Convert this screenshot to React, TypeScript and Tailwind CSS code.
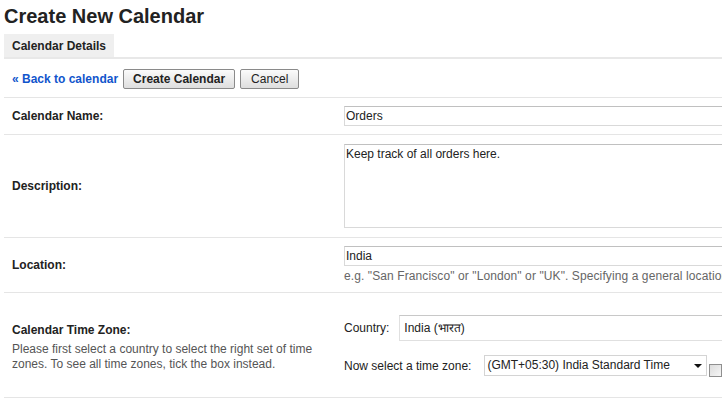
import React from 'react';

const Row: React.FC<{ label: React.ReactNode; children: React.ReactNode; className?: string }> = ({
  label,
  children,
  className = 'py-2',
}) => (
  <div className={`flex items-center border-b border-[#e5e5e5] ${className}`}>
    <div className="w-[340px] shrink-0 pl-2 pr-3">{label}</div>
    <div className="flex-1">{children}</div>
  </div>
);

const inputCls =
  'h-[20px] w-[420px] border border-[#d9d9d9] border-t-[#c0c0c0] bg-white px-[1px] leading-[18px] text-[12px] text-[#222]';

export default function App() {
  return (
    <div className="min-h-screen overflow-hidden bg-white font-['Liberation_Sans',Arial,sans-serif] text-[12px] leading-[15px] text-[#222]">
      <div className="ml-1 w-[1000px]">
        <h1 className="pt-[4px] text-[20px] font-bold leading-[24px] text-[#222]">Create New Calendar</h1>

        {/* tab strip */}
        <div className="mt-[6px] border-b-2 border-[#e8e8e8]">
          <div className="inline-block bg-[#efefef] px-2 pt-[1px] font-bold leading-[22px] text-[#222]">Calendar Details</div>
        </div>

        {/* actions */}
        <div className="flex items-center gap-[5px] border-b border-[#e5e5e5] pl-2 pt-[10px] pb-[8px]">
          <a href="#" className="font-bold text-[#15c] no-underline">
            « Back to calendar
          </a>
          <button className="h-[20px] rounded-[2px] border border-[#8a8a8a] bg-gradient-to-b from-[#fbfbfb] to-[#dedede] px-[9px] font-bold leading-[18px] text-[#222]">
            Create Calendar
          </button>
          <button className="h-[20px] rounded-[2px] border border-[#8a8a8a] bg-gradient-to-b from-[#fbfbfb] to-[#dedede] px-[10px] leading-[18px] text-[#222]">
            Cancel
          </button>
        </div>

        <Row label={<span className="font-bold">Calendar Name:</span>}>
          <input className={inputCls} defaultValue="Orders" readOnly />
        </Row>

        <Row label={<span className="font-bold">Description:</span>} className="py-[9px]">
          <textarea
            className="block h-[84px] w-[420px] resize-none border border-[#d9d9d9] border-t-[#c0c0c0] bg-white px-[1px] pt-[2px] leading-[15px] text-[12px] text-[#222]"
            defaultValue="Keep track of all orders here."
            readOnly
          />
        </Row>

        <Row label={<span className="font-bold">Location:</span>}>
          <input className={inputCls} defaultValue="India" readOnly />
          <div className="mt-[2px] whitespace-nowrap leading-[16px] tracking-[0.1px] text-[#666]">
            e.g. "San Francisco" or "London" or "UK". Specifying a general location will help people find events on your calendar (if it's public)
          </div>
        </Row>

        <Row
          className="py-0"
          label={
            <div className="pt-[4px]">
              <div className="mb-[4px] font-bold">Calendar Time Zone:</div>
              <div className="text-[#555]">
                Please first select a country to select the right set of time zones. To see all time zones, tick the box instead.
              </div>
            </div>
          }
        >
          <div className="flex flex-col gap-[14px] pt-[22px] pb-[20px]">
            <div className="flex items-center gap-[10px]">
              <span>Country:</span>
              <div className="flex h-[26px] w-[420px] items-center border border-[#e0e0e0] border-t-[#c8c8c8] bg-white pl-[4px]">
                India (भारत)
              </div>
            </div>
            <div className="flex items-center gap-[13px]">
              <span>Now select a time zone:</span>
              <div className="flex items-start">
                <div className="flex h-[21px] w-[223px] items-center justify-between border border-[#d4d4d4] bg-white pl-[2px] pr-[4px]">
                  <span>(GMT+05:30) India Standard Time</span>
                  <svg width="8" height="4" viewBox="0 0 8 4">
                    <path d="M0 0h8L4 4z" fill="#111" />
                  </svg>
                </div>
                <span className="ml-[2px] mt-[9px] inline-block h-[13px] w-[13px] border border-[#8f8f8f] bg-gradient-to-br from-[#dcdcdc] to-[#f6f6f6]" />
              </div>
            </div>
          </div>
        </Row>
      </div>
    </div>
  );
}
